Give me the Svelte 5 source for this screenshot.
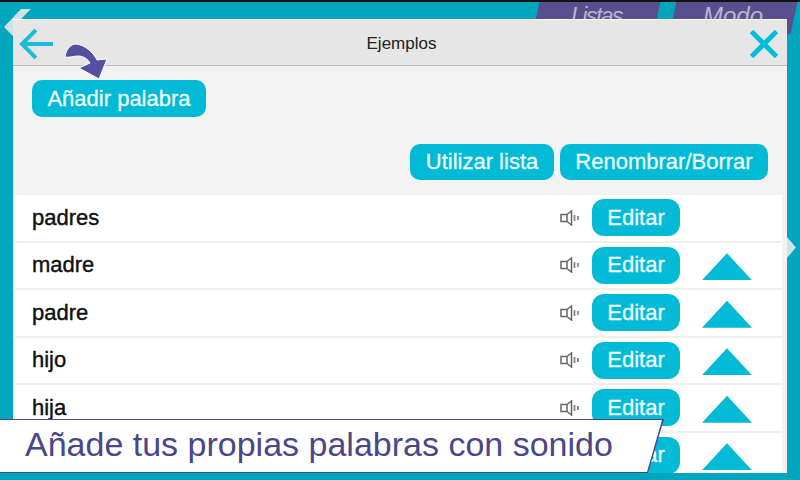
<script>
	const words = ['padres', 'madre', 'padre', 'hijo', 'hija', ''];
</script>

<div class="screen">
	<div class="tabs">
		<div class="tab"><span>Listas</span></div>
		<div class="tab"><span>Modo</span></div>
	</div>
	<div class="side-left"></div>
	<div class="side-right"></div>

	<main class="panel">
		<header class="head">
			<svg class="back" width="38" height="38" viewBox="0 0 38 38">
				<path d="M36 19H5M19 5 5 19l14 14" fill="none" stroke="#1dbcd8" stroke-width="4" />
			</svg>
			<span class="title">Ejemplos</span>
			<svg class="close" width="32" height="32" viewBox="0 0 32 32">
				<path d="M3.500 3.500 28.500 28.500M28.500 3.500 3.500 28.500" fill="none" stroke="#00bcd8" stroke-width="5" />
			</svg>
		</header>
		<div class="actions">
			<button class="btn add">Añadir palabra</button>
			<div class="list-actions">
				<button class="btn use">Utilizar lista</button>
				<button class="btn rename">Renombrar/Borrar</button>
			</div>
		</div>
		<div class="rows">
			{#each words as word, i}
				<div class="row">
					<span class="word">{word}</span>
					<svg class="speaker" width="20" height="16" viewBox="0 0 20 16">
						<path d="M1 4.500h6v7H1zM7 4.500 11.500 1v14L7 11.500" fill="none" stroke="#666" stroke-width="1.500" />
						<path d="M14.500 5v6M18 6v4" stroke="#888" stroke-width="1.800" />
					</svg>
					<button class="btn edit">Editar</button>
					<div class="up-slot">
						{#if i > 0}<div class="up"></div>{/if}
					</div>
				</div>
			{/each}
		</div>
	</main>

	<svg class="pointer" width="46" height="40" viewBox="0 0 46 40">
		<path d="M3 16C4 8 9 3 14 3c9 1 17 8 21 16l10-1-8 20-20-11 11-5C26 18 21 15 16 15c-5 0-9 2-13 1z" fill="#5350a0" stroke="#fff" stroke-width="1" />
	</svg>

	<div class="banner">
		<span>Añade tus propias palabras con sonido</span>
	</div>
</div>

<style>
	:global(body) {
		margin: 0;
		font-family: "Liberation Sans", Arial, sans-serif;
	}

	.screen {
		position: relative;
		width: 800px;
		height: 480px;
		box-sizing: border-box;
		padding: 17px 13px 7px;
		overflow: hidden;
		background: #00a5be;
		border-top: 2px solid #111;
	}

	.tabs {
		position: absolute;
		top: 0;
		left: 536px;
		display: flex;
		gap: 16px;
	}

	.tab {
		width: 121px;
		height: 32px;
		background: #5a4f8e;
		transform: skewX(-12deg);
		display: flex;
		justify-content: center;
	}

	.tab span {
		transform: skewX(12deg);
		font-size: 24px;
		font-style: italic;
		color: #b8b4cc;
		line-height: 28px;
	}

	.tab:first-child span {
		font-size: 23px;
		letter-spacing: -1.500px;
	}

	.side-left {
		position: absolute;
		left: 4px;
		top: 7px;
		width: 27px;
		height: 27px;
		background: #cfe3e6;
		clip-path: polygon(0 18px, 17px 0, 27px 0, 9px 18px, 9px 27px);
	}

	.side-right {
		position: absolute;
		left: 787px;
		top: 235px;
		width: 9px;
		height: 21px;
		background: #cfe3e6;
		clip-path: polygon(0 0, 100% 50%, 0 100%);
	}

	.panel {
		position: relative;
		height: 100%;
		display: flex;
		flex-direction: column;
		background: #f3f3f3;
		overflow: hidden;
	}

	.head {
		flex: none;
		height: 47px;
		box-sizing: border-box;
		padding: 2px 7px 0 4px;
		display: flex;
		align-items: center;
		justify-content: space-between;
		background: #e6e6e6;
		border-top: 1px solid #fff;
		border-bottom: 1px solid #bbb;
	}

	.title {
		font-size: 17px;
		color: #222;
	}

	.btn {
		border: none;
		padding: 0;
		margin: 0;
		font-family: inherit;
		font-size: 22px;
		color: #eefcff;
		background: #00bad6;
		border-radius: 10px;
		-webkit-text-stroke: 0.3px #eefcff;
	}

	.actions {
		flex: none;
		height: 129px;
		box-sizing: border-box;
		padding: 14px 19px 0 19px;
		display: flex;
		flex-direction: column;
		align-items: flex-start;
	}

	.add {
		width: 174px;
		height: 37px;
	}

	.list-actions {
		align-self: flex-end;
		display: flex;
		gap: 6px;
		margin-top: 27px;
	}

	.use {
		width: 144px;
		height: 36px;
	}

	.rename {
		width: 208px;
		height: 36px;
	}

	.rows {
		margin: 0 5px 0 2px;
		background: #fff;
	}

	.row {
		box-sizing: border-box;
		height: 47.500px;
		padding: 0 8px 0 17px;
		display: flex;
		align-items: center;
		border-bottom: 2px solid #f0f0f0;
	}

	.word {
		flex: 1;
		font-size: 22px;
		color: #111;
		-webkit-text-stroke: 0.4px #111;
	}

	.speaker {
		margin-right: 12px;
	}

	.edit {
		width: 88px;
		height: 37px;
		border-radius: 12px;
	}

	.up-slot {
		width: 94px;
		height: 30px;
		display: flex;
		justify-content: center;
		align-items: flex-end;
	}

	.up {
		width: 50px;
		height: 27px;
		background: #00bad6;
		clip-path: polygon(50% 0, 100% 100%, 0 100%);
	}

	.pointer {
		position: absolute;
		left: 62px;
		top: 39px;
	}

	.banner {
		position: absolute;
		left: 0;
		top: 417px;
		width: 664px;
		height: 54px;
		box-sizing: border-box;
		padding-bottom: 4px;
		background: #4b4690;
		clip-path: polygon(0 0, 100% 0, 648px 100%, 0 100%);
		display: flex;
		align-items: center;
	}

	.banner::before {
		content: "";
		position: absolute;
		inset: 1px 0;
		background: #fff;
		clip-path: polygon(0 0, 662px 0, 647px 100%, 0 100%);
	}

	.banner span {
		position: relative;
		margin-left: 25px;
		font-size: 34px;
		color: #4a4688;
	}
</style>
